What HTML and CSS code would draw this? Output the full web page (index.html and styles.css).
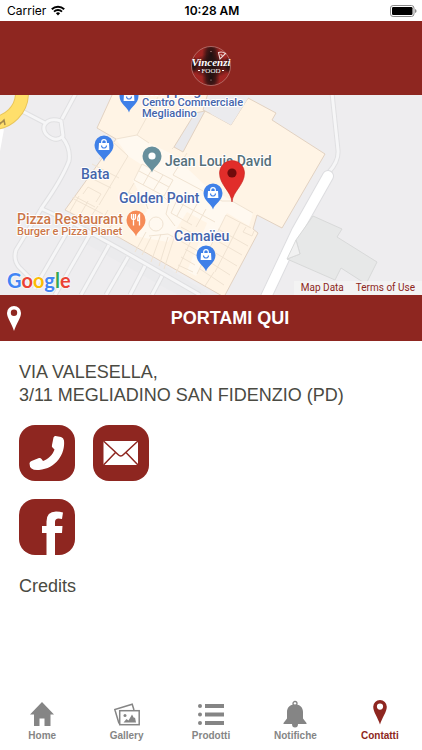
FILE: index.html
```html
<!DOCTYPE html>
<html lang="it">
<head>
    <meta charset="UTF-8">
    <meta name="viewport" content="width=device-width, initial-scale=1">
    <title>Vincenzi Food</title>
    <link rel="stylesheet" href="styles.css">
</head>
<body>
    <div class="status-bar">
        <div class="status-left">
            <span>Carrier</span>
            <svg class="wifi" viewBox="0 0 14 11">
                <path d="M0.8 4.2 A9 9 0 0 1 13.2 4.2" fill="none" stroke="#000" stroke-width="2"/>
                <path d="M3 6.6 A5.8 5.8 0 0 1 11 6.6" fill="none" stroke="#000" stroke-width="1.9"/>
                <path d="M7 10.5 L4.9 8.3 A3 3 0 0 1 9.1 8.3 Z"/>
            </svg>
        </div>
        <span class="status-time">10:28 AM</span>
        <div class="status-right">
            <svg class="battery" viewBox="0 0 27 12">
                <rect x="0.5" y="0.5" width="23.5" height="11" rx="2.6" fill="#fff" stroke="#8a8a8a"/>
                <rect x="2" y="2" width="20.5" height="8" rx="1.2"/>
                <path d="M25 4 Q26.6 4.6 26.6 6 Q26.6 7.4 25 8 Z" fill="#8a8a8a"/>
            </svg>
        </div>
    </div>

    <header class="header">
        <!-- Logo -->
        <svg class="logo" viewBox="0 0 44 42" role="img" aria-label="Vincenzi Food">
            <defs>
                <radialGradient id="glow">
                    <stop offset="0" stop-color="#1c1010"/>
                    <stop offset="0.5" stop-color="#1c1010" stop-opacity="0.7"/>
                    <stop offset="1" stop-color="#1c1010" stop-opacity="0"/>
                </radialGradient>
                <clipPath id="disc"><circle cx="22" cy="21" r="19.5"/></clipPath>
            </defs>
            <circle cx="22" cy="21" r="19.5" fill="#a02522"/>
            <g clip-path="url(#disc)">
                <ellipse cx="22" cy="21" rx="21" ry="12" fill="url(#glow)"/>
                <ellipse cx="22" cy="10" rx="9" ry="16" fill="url(#glow)"/>
                <ellipse cx="22" cy="33" rx="9" ry="14" fill="url(#glow)"/>
                <ellipse cx="4" cy="20" rx="6" ry="9" fill="url(#glow)"/>
                <ellipse cx="40" cy="20" rx="6" ry="9" fill="url(#glow)"/>
            </g>
            <circle cx="22" cy="21" r="19.5" fill="none" stroke="#c08480" stroke-width="0.7"/>
            <path d="M29.5 7.5 Q33 6 36.5 8.5 L31 14 Z" fill="none" stroke="#eedcda" stroke-width="1.1"/>
            <path d="M31.5 9.5 L33.5 10.5" stroke="#eedcda" stroke-width="1.2"/>
            <circle cx="22" cy="6.5" r="0.6" fill="#d9b0ad"/>
            <circle cx="22" cy="35" r="0.6" fill="#d9b0ad"/>
            <text class="logo-name" x="22" y="21" text-anchor="middle">Vincenzi</text>
            <text class="logo-food" x="22" y="28" text-anchor="middle">FOOD</text>
            <path d="M9 25.5 h2 M33 25.5 h2" stroke="#fff" stroke-width="1"/>
        </svg>
    </header>

    <main class="main">
        <div class="map">
            <svg class="map-canvas" viewBox="0 0 422 200" preserveAspectRatio="xMidYMid slice">
                <defs>
                    <g id="pin">
                        <path d="M0 16.5 C-1.2 11 -9.5 8 -9.5 0 A9.5 9.5 0 0 1 9.5 0 C9.5 8 1.2 11 0 16.5 Z"/>
                    </g>
                    <g id="bag" stroke="#fff" fill="none">
                        <path d="M-5 -2 H5 L5.4 5 H-5.4 Z" fill="#fff" stroke="none"/>
                        <path d="M-2.3 -2 V-3 A2.3 2.3 0 0 1 2.3 -3 V-2" stroke-width="1.2"/>
                        <path d="M-2.5 0.5 A2.5 2.5 0 0 0 2.5 0.5" stroke="#3f80e8" stroke-width="1.2"/>
                    </g>
                </defs>
                <rect width="422" height="200" fill="#eeedef"/>

                <!-- service lanes and parking -->
                <path d="M60 118 L125 146 L211 200 L178 200 L92 152 L40 122 Z" fill="#ebebed"/>
                <g class="lane-edge">
                    <path d="M76 -2 L62 24"/>
                    <path d="M20 15 L45 28"/>
                    <path d="M44 31 Q48 22 61 26 L63 41 Q56 48 47 40 Q43 36 44 31 Z"/>
                    <path d="M62 42 Q71 53 69 66 Q62 84 43 111 L16 155 Q13 165 19 172 L30 183"/>
                    <path d="M40 113 L75 129 L120 154 L200 200"/>
                    <path d="M73 127 L34 194 M90 139 L55 200 M109 150 L81 200 M128 162 L106 200 M145 171 L130 200 M162 181 L152 200"/>
                    <path d="M332 -2 L338 55 Q339 66 329 77"/>
                </g>
                <g class="lane">
                    <path d="M76 -2 L62 24"/>
                    <path d="M20 15 L45 28"/>
                    <path d="M44 31 Q48 22 61 26 L63 41 Q56 48 47 40 Q43 36 44 31 Z"/>
                    <path d="M62 42 Q71 53 69 66 Q62 84 43 111 L16 155 Q13 165 19 172 L30 183"/>
                    <path d="M40 113 L75 129 L120 154 L200 200"/>
                    <path d="M73 127 L34 194 M90 139 L55 200 M109 150 L81 200 M128 162 L106 200 M145 171 L130 200 M162 181 L152 200"/>
                    <path d="M332 -2 L338 55 Q339 66 329 77"/>
                </g>
                <path d="M-2 56 L2 34" stroke="#fff" stroke-width="4"/>
                <path d="M328 81 L297 136 L266 202" fill="none" stroke="#dddde0" stroke-width="12" stroke-linecap="round"/>
                <path d="M328 81 L297 136 L266 202" fill="none" stroke="#fff" stroke-width="10" stroke-linecap="round"/>
                <circle cx="-8" cy="-2" r="30" fill="none" stroke="#e9c65c" stroke-width="14"/>
                <circle cx="-8" cy="-2" r="30" fill="none" stroke="#ffdf6b" stroke-width="12"/>
                <path d="M-1 30 L4 25 L5 30 M0 28 L4 26" stroke="#a58a4c" stroke-width="1.5" fill="none"/>

                <!-- grey building -->
                <path d="M313 121 L342 134 L337 142 L377 167 L366 189 L341 173 L335 185 L287 164 L300 159 L296 145 Z" fill="#e7e8e8" stroke="#d8d9d9"/>
                <path d="M296 145 L300 159 L287 164 Z" fill="#f1f1f1" stroke="#d8d9d9"/>

                <!-- shopping centre -->
                <path d="M113 -2 L97 33 L116 44 L65 115 L120 143 L224 202 L258 138 L253 134 L257 120 L282 133 L325 59 L272 25 L276 18 L248 3 L231 30 L211 19 L203 15 L208 -2 Z" fill="#fff4e5" stroke="#e2d2c2"/>
                <path d="M195 18 L174 52 L183 57 L205 16 Z" fill="#e9e9ec" stroke="#e2d2c2"/>
                <path d="M211 -2 L208 14 L211 19 L231 30 L248 3 L240 -2 Z" fill="#ebebee"/>
                <path d="M116 44 L137 40 L149 48 L172 59 L205 90 L253 118 L249 131 L227 118 L196 181 L187 176 L207 128 L187 117 L168 147 L134 141 L129 133 L147 116 L133 85 L142 70 L128 61 Z" fill="#fff9f0"/>
                <g class="shops">
                    <path d="M137 40 L158 2 M116 44 L137 40 L149 48 M172 54 L174 52"/>
                    <path d="M99 64 L113 47 L128 61 L99 110 M92 69 L119 83 M85 80 L111 93 M83 99 L88 92 L101 99 L96 107 M74 101 L95 112"/>
                    <path d="M142 69 L173 85 L164 101 L134 85 Z M139 76 L169 92 M152 74 L143 90 M163 80 L153 96"/>
                    <path d="M72 103 L103 119 M79 101 L69 118 M88 106 L79 122 M98 111 L87 127 M108 115 L98 132 M121 119 L107 136"/>
                    <path d="M134 88 L124 105 M128 97 L145 106 L148 114 M164 102 L169 107 L166 119 L175 131 M145 106 L157 101"/>
                    <circle cx="156" cy="129" r="7"/>
                    <path d="M146 137 L135 157 M151 142 L142 160 M161 139 L151 167 M168 142 L159 171 M175 140 L164 174 M149 141 L168 139 L207 161"/>
                    <path d="M176 107 L171 118 L192 130 M187 102 L177 121 M197 109 L187 127 M206 114 L196 132 M176 106 L215 127"/>
                    <path d="M181 132 L194 139 L176 178 M185 154 L199 162 M181 162 L195 170 M178 170 L193 177"/>
                    <path d="M226 120 L251 133 M226 120 L197 179 M218 134 L248 151 M214 144 L242 160 M209 154 L237 171 M205 164 L230 180 M200 174 L224 190 M240 128 L229 150 M229 150 L215 177 M214 177 L205 191"/>
                    <path d="M246 132 L243 137 L252 141 L254 136 M187 58 L173 80 L222 106 L232 106 L253 118"/>
                </g>

                <!-- places -->
                <use href="#pin" x="129" y="1" fill="#3f80e8"/><use href="#bag" x="129" y="1"/>
                <use href="#pin" x="104" y="50" fill="#3f80e8"/><use href="#bag" x="104" y="50"/>
                <use href="#pin" x="152" y="61" fill="#678f9c"/><circle cx="152" cy="61" r="3.6" fill="#fff"/>
                <use href="#pin" x="213" y="98" fill="#3f80e8"/><use href="#bag" x="213" y="98"/>
                <use href="#pin" x="206" y="160" fill="#3f80e8"/><use href="#bag" x="206" y="160"/>
                <use href="#pin" x="136" y="125" fill="#f68b57"/>
                <path d="M131.5 119 V123 Q131.5 124.5 133.5 124.5 Q135.5 124.5 135.5 123 V119 M133.5 119 V130.5 M139.5 130.5 V119.5 Q137.5 121 137.8 125.5 H139.5" fill="none" stroke="#fff" stroke-width="1.3"/>

                <g class="label blue">
                    <text class="big" x="142" y="0">Shopping</text>
                    <text class="small" x="142" y="11">Centro Commerciale</text>
                    <text class="small" x="142" y="22">Megliadino</text>
                    <text class="big" x="81" y="84">Bata</text>
                    <text class="big" x="119" y="108">Golden Point</text>
                    <text class="big" x="174" y="146">Camaïeu</text>
                </g>
                <text class="label big slate" x="165" y="71">Jean Louis David</text>
                <g class="label orange">
                    <text class="big" x="17" y="129">Pizza Restaurant</text>
                    <text class="small" x="17" y="140">Burger e Pizza Planet</text>
                </g>

                <!-- selected place -->
                <path d="M232 107 C231 96 219.5 90 219.5 78 A12.5 12.5 0 0 1 244.5 78 C244.5 90 233 96 232 107 Z" fill="#e12d2a" stroke="#c4211f" stroke-width="0.6"/>
                <circle cx="232" cy="78" r="4.6" fill="#700b0c"/>
            </svg>
            <div class="map-footer">
                <div class="google"><span class="g-blue">G</span><span class="g-red">o</span><span class="g-yellow">o</span><span class="g-blue">g</span><span class="g-green">l</span><span class="g-red">e</span></div>
                <div class="map-links">
                    <a href="#">Map Data</a>
                    <a href="#">Terms of Use</a>
                </div>
            </div>
        </div>

        <button class="directions" type="button">
            <svg class="directions-pin" viewBox="0 0 14 25">
                <path fill-rule="evenodd" d="M7 0 A7 7 0 0 1 14 7 C14 12 9 18 7 25 C5 18 0 12 0 7 A7 7 0 0 1 7 0 Z M7 3.5 A3.2 3.2 0 1 0 7 9.9 A3.2 3.2 0 1 0 7 3.5 Z" fill="#fff"/>
            </svg>
            <span>PORTAMI QUI</span>
        </button>

        <div class="content">
            <address class="address">VIA VALESELLA,<br>3/11 MEGLIADINO SAN FIDENZIO (PD)</address>
            <div class="contacts">
                <a class="contact" href="#" aria-label="Telefono">
                    <svg viewBox="0 0 56 56">
                        <path d="M36.5 11 L42 12 Q44.5 12.5 45 15.5 C46.5 29 37 43.5 20 45 Q15 45.5 12.5 43.5 Q10.5 42 10.5 38.5 Q10.5 36.5 12.5 36 L20 33 Q21.5 32.5 22.5 34 L24 36 C29 34.5 34 29.5 35.5 24.5 L33.5 22.5 Q32.5 21.5 33 20 L34.5 12.5 Q35 10.8 36.5 11 Z" fill="#fff"/>
                    </svg>
                </a>
                <a class="contact" href="#" aria-label="Email">
                    <svg viewBox="0 0 56 56">
                        <rect x="10.5" y="16" width="34.5" height="24" fill="#fff"/>
                        <path d="M10.5 16 L25 29.5 Q27.8 32.5 30.5 29.5 L45 16 M10.5 40 L22.5 27.5 M45 40 L33 27.5" fill="none" stroke="#8e2620" stroke-width="1.5"/>
                    </svg>
                </a>
                <a class="contact" href="#" aria-label="Facebook">
                    <svg viewBox="0 0 56 56">
                        <path d="M27.5 56 V34 H23 V27 H27.5 V22.5 Q27.5 12.5 37 12.5 Q41 12.5 44 13.5 L43 20 Q36 18 36 23 V27 H43.5 L43 34 H36 V56 Z" fill="#fff"/>
                    </svg>
                </a>
            </div>
            <a class="credits" href="#">Credits</a>
        </div>
    </main>

    <nav class="tabs">
        <a class="tab" href="#">
            <svg viewBox="0 0 26 28"><path d="M13 2 L25 14.5 H21.5 V26 H15.5 V18.5 H10.5 V26 H5 V14.5 H1 Z"/></svg>
            <span>Home</span>
        </a>
        <a class="tab" href="#">
            <svg viewBox="0 0 26 28">
                <path d="M5 23.5 L0.8 9.5 L18.2 4.3 L20 10" fill="none" stroke="currentColor" stroke-width="1.5"/>
                <rect x="5.7" y="10.7" width="19.5" height="14" fill="#fff" stroke="currentColor" stroke-width="1.5"/>
                <circle cx="11" cy="15.5" r="1.5"/>
                <path d="M9.5 22.5 L12.5 19 L14.5 20.5 L18 14.5 L20 18 L21 17.5 L22 22.5 Z"/>
            </svg>
            <span>Gallery</span>
        </a>
        <a class="tab" href="#">
            <svg viewBox="0 0 26 28">
                <circle cx="2" cy="6" r="2"/><circle cx="2" cy="14.5" r="2"/><circle cx="2" cy="23" r="2"/>
                <path d="M7 4 H26 V8 H7 Z M7 12.5 H26 V16.5 H7 Z M7 21 H26 V25 H7 Z"/>
            </svg>
            <span>Prodotti</span>
        </a>
        <a class="tab" href="#">
            <svg viewBox="0 0 26 28">
                <circle cx="13" cy="3.5" r="2" fill="none" stroke="currentColor" stroke-width="1.3"/>
                <path d="M13 4.5 C18.5 4.5 21 8 21 12 V18.5 L24.5 23 V24 H1.5 V23 L5 18.5 V12 C5 8 7.5 4.5 13 4.5 Z"/>
                <path d="M10 24 H16 Q16 27.5 13 27.5 Q10 27.5 10 24 Z"/>
            </svg>
            <span>Notifiche</span>
        </a>
        <a class="tab active" href="#">
            <svg viewBox="0 0 26 28"><path fill-rule="evenodd" d="M13 0 A6.8 6.8 0 0 1 19.8 6.8 C19.8 12 15 18 13 24.5 C11 18 6.2 12 6.2 6.8 A6.8 6.8 0 0 1 13 0 Z M13 3.5 A3.1 3.1 0 1 0 13 9.7 A3.1 3.1 0 1 0 13 3.5 Z"/></svg>
            <span>Contatti</span>
        </a>
    </nav>
</body>
</html>
```

FILE: styles.css
```css
* {
    box-sizing: border-box;
}
body {
    font-family: "Liberation Sans", Arial, sans-serif;
    background-color: #ffffff;
    margin: 0;
    min-height: 100vh;
    display: flex;
    flex-direction: column;
}
a {
    color: inherit;
    text-decoration: none;
}
.status-bar {
    display: flex;
    align-items: center;
    height: 21px;
    padding: 0 5px 0 7px;
    font-family: Inter, sans-serif;
    font-size: 12px;
    color: #000000;
}
.status-left, .status-right {
    flex: 1;
    display: flex;
    align-items: center;
    gap: 5px;
}
.status-right {
    justify-content: flex-end;
}
.status-time {
    font-weight: 600;
}
.wifi {
    width: 14px;
    height: 11px;
}
.battery {
    width: 27px;
    height: 12px;
}
.header {
    display: flex;
    justify-content: center;
    align-items: flex-end;
    height: 74px;
    padding-bottom: 8px;
    background-color: #8e2620;
}
.logo {
    width: 44px;
    height: 42px;
}
.logo-name {
    font-family: "Liberation Serif", serif;
    font-style: italic;
    font-weight: bold;
    font-size: 11px;
    fill: #ffffff;
}
.logo-food {
    font-family: "Liberation Serif", serif;
    font-size: 7px;
    fill: #ffffff;
}
.main {
    flex: 1;
}
.map {
    position: relative;
    height: 200px;
    overflow: hidden;
}
.map-canvas {
    display: block;
    width: 100%;
    height: 100%;
}
.lane-edge, .lane {
    fill: none;
    stroke-linejoin: round;
}
.lane-edge {
    stroke: #e0e0e2;
    stroke-width: 5px;
}
.lane {
    stroke: #f6f6f7;
    stroke-width: 3px;
}
.shops {
    fill: none;
    stroke: #f0e3d2;
    stroke-width: 1px;
}
.label {
    font-family: Roboto, sans-serif;
    font-weight: 500;
    paint-order: stroke;
    stroke: #ffffff;
    stroke-width: 2px;
    stroke-linejoin: round;
}
.big {
    font-size: 14px;
}
.small {
    font-size: 11px;
}
.blue {
    fill: #4565ab;
}
.slate {
    fill: #56707a;
}
.orange {
    fill: #cb7648;
}
/* Logo and links lie over the bottom edge of the map */
.map-footer {
    position: absolute;
    left: 0;
    right: 0;
    bottom: 0;
    display: flex;
    justify-content: space-between;
    align-items: flex-end;
    padding-left: 7px;
}
.google {
    font-family: Lato, sans-serif;
    font-weight: bold;
    font-size: 20px;
    line-height: 29px;
    text-shadow: 0 0 2px #ffffff, 0 0 2px #ffffff;
}
.g-blue {
    color: #4285f4;
}
.g-red {
    color: #ea4335;
}
.g-yellow {
    color: #fbbc05;
}
.g-green {
    color: #34a853;
}
.map-links {
    display: flex;
    gap: 12px;
    padding: 0 7px;
    font-family: Roboto, sans-serif;
    font-size: 10px;
    line-height: 14px;
    color: #8e2620;
    background-color: rgba(245, 245, 245, 0.7);
}
.directions {
    display: grid;
    grid-template-columns: 38px 1fr;
    align-items: center;
    width: 100%;
    height: 46px;
    padding: 0 7px;
    border: none;
    background-color: #8e2620;
    color: #ffffff;
    font-family: inherit;
    font-size: 18px;
    font-weight: bold;
    cursor: pointer;
}
.directions-pin {
    width: 14px;
    height: 25px;
}
.content {
    padding: 20px 19px;
    font-size: 18px;
    line-height: 23px;
    color: #4a4a42;
}
.address {
    font-style: normal;
}
.contacts {
    display: grid;
    grid-template-columns: 56px 56px;
    gap: 18px;
    margin: 18px 0 20px;
}
.contact {
    height: 56px;
    border-radius: 16px;
    background-color: #8e2620;
    overflow: hidden;
}
.contact svg {
    display: block;
    width: 56px;
    height: 56px;
}
.tabs {
    display: flex;
    padding-bottom: 8px;
}
.tab {
    flex: 1;
    display: flex;
    flex-direction: column;
    align-items: center;
    gap: 2px;
    font-size: 10px;
    line-height: 12px;
    font-weight: bold;
    color: #858585;
}
.tab svg {
    width: 26px;
    height: 28px;
    fill: currentColor;
}
.active {
    color: #8e2620;
}
```
